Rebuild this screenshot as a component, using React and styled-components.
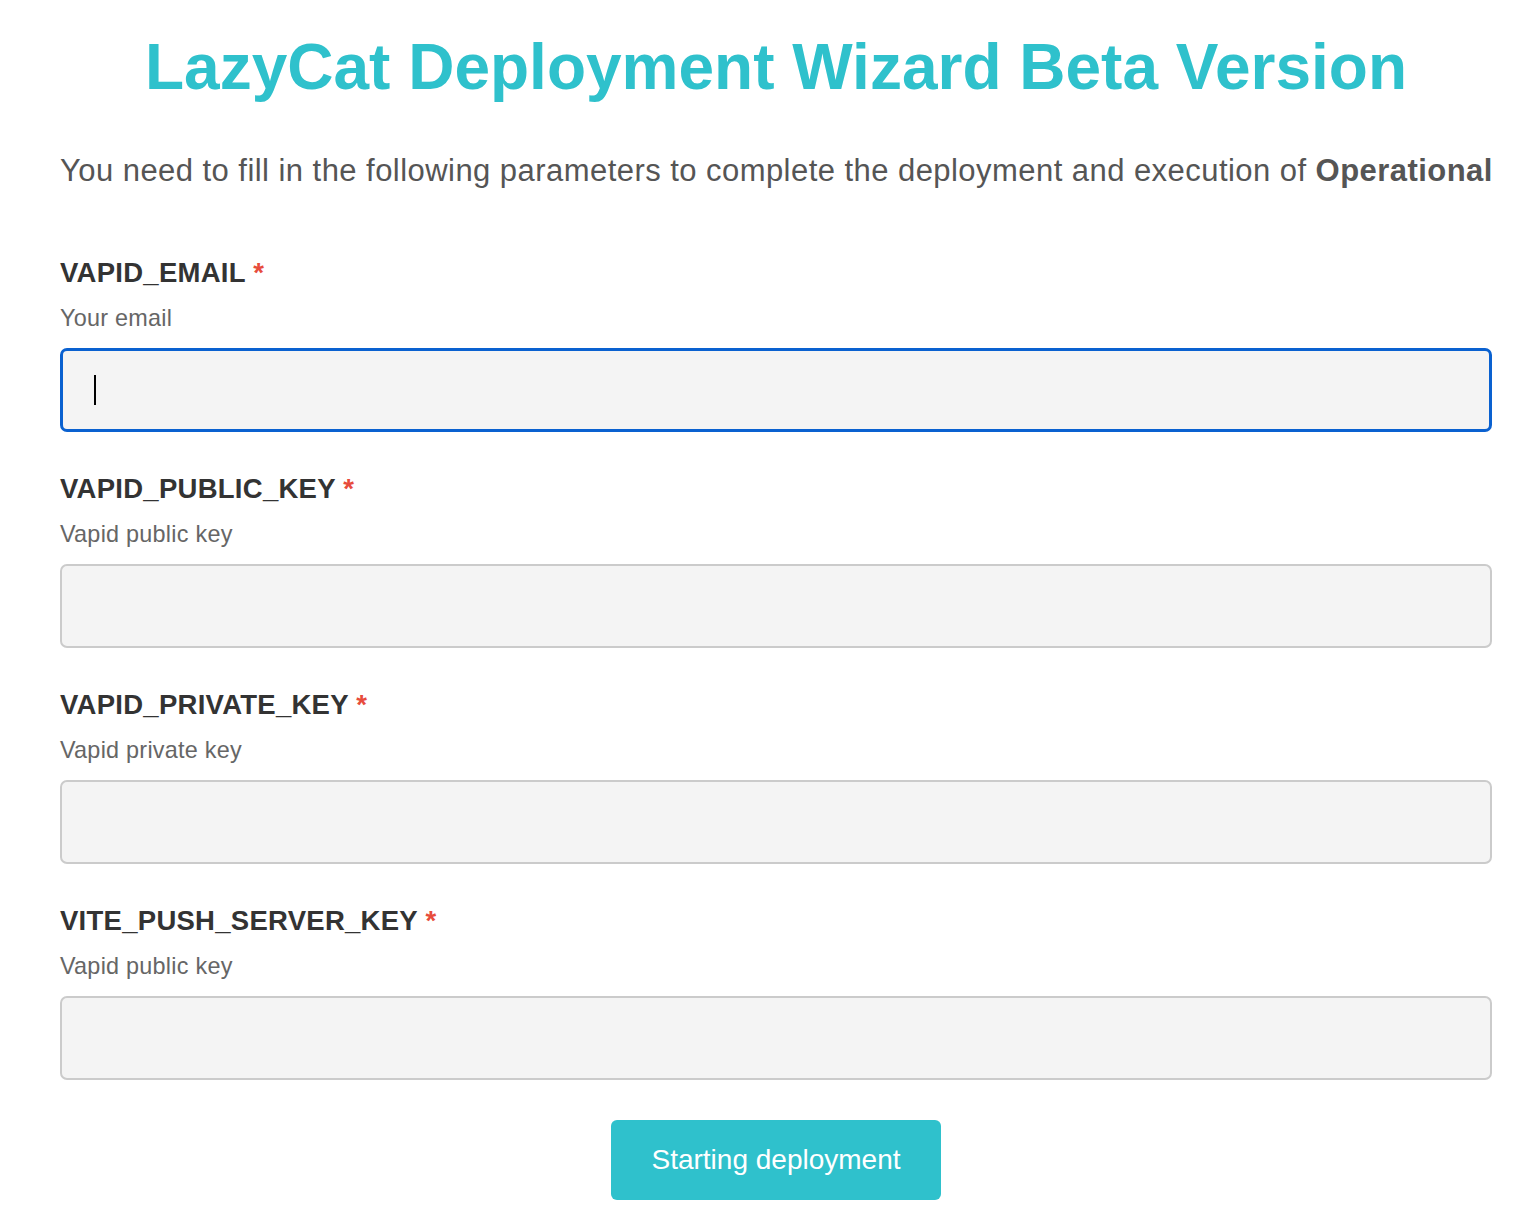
import React from "react";
import styled, { createGlobalStyle } from "styled-components";

const fields = [
  { name: "VAPID_EMAIL", desc: "Your email", focused: true },
  { name: "VAPID_PUBLIC_KEY", desc: "Vapid public key" },
  { name: "VAPID_PRIVATE_KEY", desc: "Vapid private key" },
  { name: "VITE_PUSH_SERVER_KEY", desc: "Vapid public key" },
];

export default function App() {
  return (
    <>
      <GlobalStyle />
      <Page>
        <Title>LazyCat Deployment Wizard Beta Version</Title>
        <Intro>
          You need to fill in the following parameters to complete the deployment and execution of{" "}
          <b>Operational</b>
        </Intro>
        <Form onSubmit={(e) => e.preventDefault()}>
          {fields.map((f) => (
            <Field key={f.name}>
              <Label>
                {f.name} <Required>*</Required>
              </Label>
              <Desc>{f.desc}</Desc>
              <InputWrap>
                <Input type="text" $focused={f.focused} autoFocus={f.focused} />
                {f.focused && <Caret />}
              </InputWrap>
            </Field>
          ))}
          <SubmitBtn type="submit">Starting deployment</SubmitBtn>
        </Form>
      </Page>
    </>
  );
}

const GlobalStyle = createGlobalStyle`
  body {
    margin: 0;
    background: #fff;
    font-family: "Liberation Sans", Arial, Helvetica, sans-serif;
  }
`;

const Page = styled.div`
  padding: 29px 44px 40px 60px;
`;

const Title = styled.h1`
  margin: 0;
  text-align: center;
  font-size: 64px;
  line-height: 77px;
  font-weight: 700;
  color: #2fc1cc;
`;

const Intro = styled.p`
  margin: 47px 0 0;
  font-size: 31px;
  line-height: 36px;
  letter-spacing: 0.45px;
  color: #555;
  white-space: nowrap;

  b {
    font-weight: 700;
  }
`;

const Form = styled.form`
  margin-top: 67px;
  display: flex;
  flex-direction: column;
  gap: 40px;
`;

const Field = styled.div`
  display: flex;
  flex-direction: column;
`;

const Label = styled.label`
  font-size: 27.5px;
  line-height: 33px;
  letter-spacing: 0.27px;
  font-weight: 700;
  color: #333;
`;

const Required = styled.span`
  color: #e74c3c;
`;

const Desc = styled.div`
  margin-top: 15px;
  font-size: 23.4px;
  line-height: 28px;
  letter-spacing: 0.25px;
  color: #666;
`;

const InputWrap = styled.div`
  position: relative;
  margin-top: 16px;
`;

const Input = styled.input`
  display: block;
  box-sizing: border-box;
  width: 100%;
  height: 84px;
  padding: 0 32px;
  font-size: 28px;
  font-family: inherit;
  background: #f4f4f4;
  border: ${(p) => (p.$focused ? "3px solid #0a61d0" : "2px solid #cbcbcb")};
  border-radius: 7px;
  outline: none;
  caret-color: transparent;
`;

const Caret = styled.span`
  position: absolute;
  left: 34px;
  top: 27px;
  width: 2px;
  height: 30px;
  background: #000;
  pointer-events: none;
`;

const SubmitBtn = styled.button`
  align-self: center;
  width: 330px;
  height: 80px;
  border: none;
  border-radius: 6px;
  background: #2fc1cc;
  color: #fff;
  font-family: inherit;
  font-size: 28px;
  cursor: pointer;
`;
